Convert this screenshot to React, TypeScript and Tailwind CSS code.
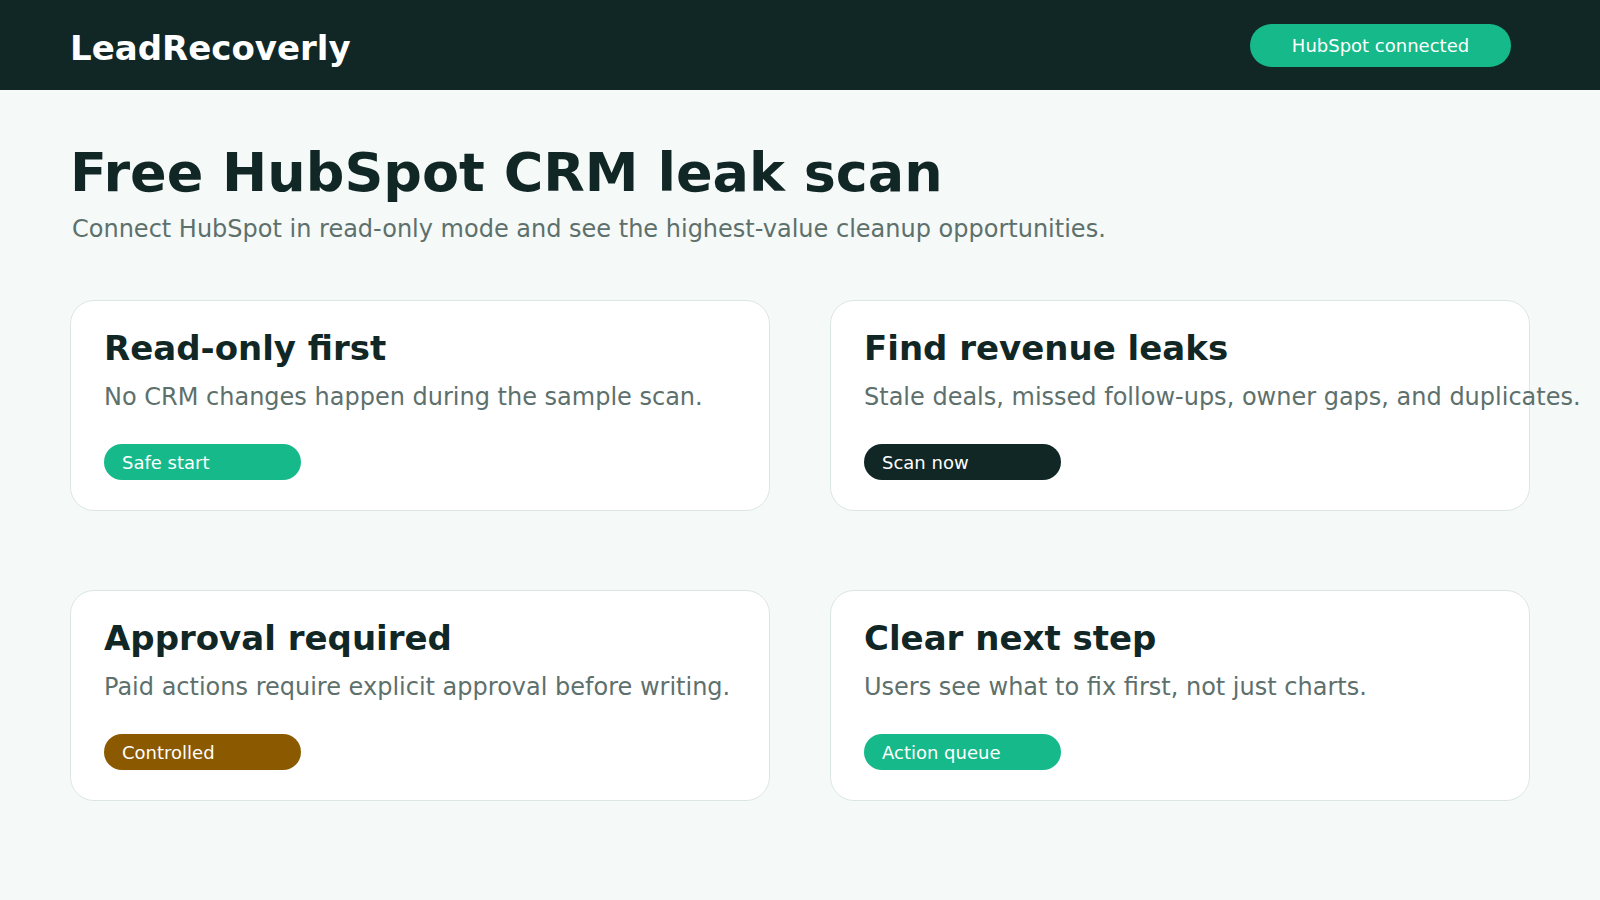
const cards = [
  {
    title: 'Read-only first',
    text: 'No CRM changes happen during the sample scan.',
    tag: 'Safe start',
    tone: 'bg-[#15b98a]',
  },
  {
    title: 'Find revenue leaks',
    text: 'Stale deals, missed follow-ups, owner gaps, and duplicates.',
    tag: 'Scan now',
    tone: 'bg-[#112725]',
  },
  {
    title: 'Approval required',
    text: 'Paid actions require explicit approval before writing.',
    tag: 'Controlled',
    tone: 'bg-[#8b5a00]',
  },
  {
    title: 'Clear next step',
    text: 'Users see what to fix first, not just charts.',
    tag: 'Action queue',
    tone: 'bg-[#15b98a]',
  },
]

export default function App() {
  return (
    <div className="min-h-screen bg-[#f5f9f8] text-[#112725] font-['DejaVu_Sans',sans-serif]">
      <header className="h-[90px] bg-[#112725] flex items-center justify-between pl-[70px] pr-[89px]">
        <div className="mt-[6px] text-[34px] font-bold text-white leading-none">LeadRecoverly</div>
        <div className="w-[261px] h-[43px] rounded-full bg-[#15b98a] text-white text-[18px] flex items-center justify-center">
          HubSpot connected
        </div>
      </header>

      <main className="px-[70px]">
        <h1 className="mt-[53px] text-[54px] font-bold leading-[1.1]">Free HubSpot CRM leak scan</h1>
        <p className="mt-[9px] ml-[2px] text-[24px] leading-[36px] text-[#5d706c]">
          Connect HubSpot in read-only mode and see the highest-value cleanup opportunities.
        </p>

        <div className="mt-[53px] grid grid-cols-2 gap-x-[60px] gap-y-[79px]">
          {cards.map((c) => (
            <div
              key={c.title}
              className="bg-white border border-[#dce7e4] rounded-[24px] px-[33px] pt-[27px] pb-[30px]"
            >
              <h2 className="text-[34px] font-bold leading-[40px]">{c.title}</h2>
              <p className="mt-[11px] text-[24px] leading-[36px] text-[#5d706c] whitespace-nowrap">{c.text}</p>
              <div
                className={`mt-[29px] w-[197px] h-[36px] rounded-full ${c.tone} text-white text-[18px] flex items-center px-[18px]`}
              >
                {c.tag}
              </div>
            </div>
          ))}
        </div>
      </main>
    </div>
  )
}
